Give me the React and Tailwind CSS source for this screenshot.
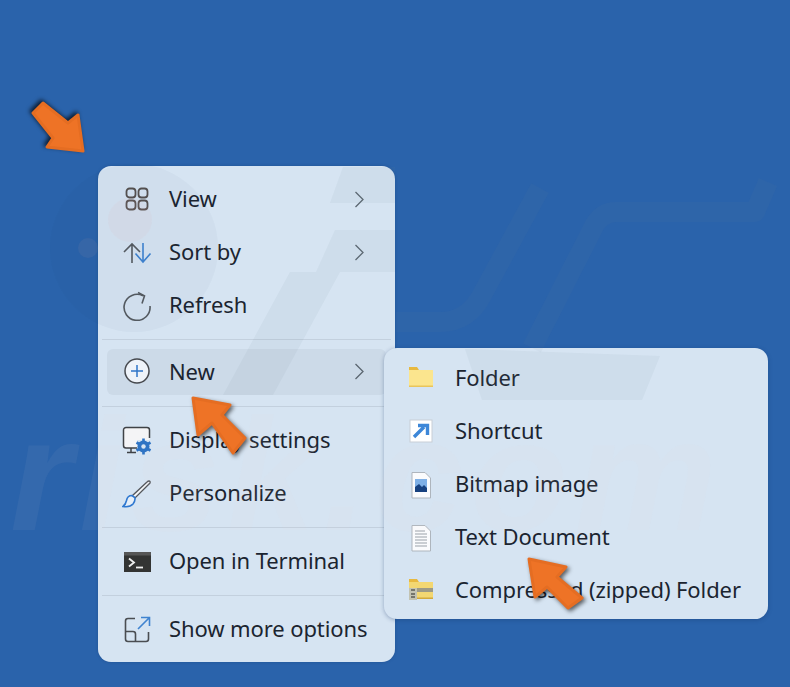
const Chevron = () => (
  <svg width="10" height="18" viewBox="0 0 10 18" fill="none" className="mr-[31px] ml-auto shrink-0">
    <path d="M1.5 1 9 8.500l-7.500 7.500" stroke="#5b6670" strokeWidth="1.3" />
  </svg>
);

const Ico = ({ children }) => (
  <svg width="30" height="30" viewBox="0 0 30 30" fill="none" className="shrink-0">
    {children}
  </svg>
);

const ViewIcon = () => (
  <Ico>
    <g stroke="#55504f" strokeWidth="1.800">
      <rect x="4.500" y="3.500" width="9" height="9" rx="3" />
      <rect x="16.500" y="3.500" width="9" height="9" rx="3" />
      <rect x="4.500" y="15.500" width="9" height="9" rx="3" />
      <rect x="16.500" y="15.500" width="9" height="9" rx="3" />
    </g>
  </Ico>
);
const SortIcon = () => (
  <Ico>
    <path d="M10 25V6M2 14l8-8 8 8" stroke="#555a60" strokeWidth="1.600" />
    <path d="M21 5v19M13.500 15.500l7.500 8.500 7.500-8.500" stroke="#3f83d0" strokeWidth="1.600" />
  </Ico>
);
const RefreshIcon = () => (
  <Ico>
    <path d="M21 4.800A13 13 0 1 0 28 15" stroke="#555a60" strokeWidth="1.600" />
    <path d="M16 1.500 22.500 5 20 12.500" stroke="#555a60" strokeWidth="1.600" />
  </Ico>
);
const NewIcon = () => (
  <Ico>
    <circle cx="15" cy="14" r="12" fill="#eef3f9" stroke="#46494e" strokeWidth="1.500" />
    <path d="M15 8v12M9 14h12" stroke="#2f75c8" strokeWidth="1.500" />
  </Ico>
);
const DisplayIcon = () => (
  <Ico>
    <path d="M4 1.500h21A2.500 2.500 0 0 1 27.500 4v10H15v8H4A2.500 2.500 0 0 1 1.500 19.500V4A2.500 2.500 0 0 1 4 1.500Z" fill="#f4f4f6" />
    <path d="M15 22H4a2.500 2.500 0 0 1-2.500-2.500V4A2.500 2.500 0 0 1 4 1.500h21A2.500 2.500 0 0 1 27.500 4v8" stroke="#3f4246" strokeWidth="1.500" />
    <path d="M9 22v4M5 26.500h9" stroke="#3f4246" strokeWidth="1.500" />
    <circle cx="21.500" cy="20.500" r="6" fill="#2f74c4" />
    <path d="M21.500 12.500v16M14.500 16.500l14 8M14.500 24.500l14-8" stroke="#2f74c4" strokeWidth="2.600" />
    <circle cx="21.500" cy="20.500" r="2.200" fill="#d8e5f2" />
  </Ico>
);
const BrushIcon = () => (
  <Ico>
    <path d="M27 2c1 0 1.500 1 1 2L13 19l-3-2L25 3c.6-.6 1.300-1 2-1Z" fill="#f2f4f7" stroke="#53565b" strokeWidth="1.300" />
    <path d="M10 16.500c-3 0-5 2-5.500 5C4 24 3 26 1 27.500c4 .6 8-.2 10-2.500 1.500-2 2.500-4 1.800-6.500Z" fill="#e5eef8" stroke="#2f78d0" strokeWidth="1.600" />
  </Ico>
);
const TerminalIcon = () => (
  <Ico>
    <rect x="2" y="5" width="27" height="20" fill="#333433" />
    <rect x="2" y="5" width="27" height="3.500" fill="#565656" />
    <path d="m7 11.500 5 4-5 4" stroke="#f0f0f0" strokeWidth="1.800" />
    <path d="M14 20.500h7" stroke="#f0f0f0" strokeWidth="1.800" />
  </Ico>
);
const MoreIcon = () => (
  <Ico>
    <path d="M13 3.500H6A2.500 2.500 0 0 0 3.500 6v18A2.500 2.500 0 0 0 6 26.500h18a2.500 2.500 0 0 0 2.500-2.500v-7" stroke="#4a4d52" strokeWidth="1.600" />
    <path d="M3.500 16.500H11a2.500 2.500 0 0 1 2.500 2.500v7.500" stroke="#4a4d52" strokeWidth="1.600" />
    <path d="M16 14 27 3M19 2.500h8.500V11" stroke="#3f83d0" strokeWidth="1.600" />
  </Ico>
);

const FolderIcon = () => (
  <Ico>
    <path d="M3 3h8l2 3h-10Z" fill="#e8b93f" />
    <rect x="3" y="6" width="24" height="17" fill="#fbe58e" />
    <rect x="3" y="21.500" width="24" height="1.500" fill="#e9c55b" />
  </Ico>
);
const ShortcutIcon = () => (
  <Ico>
    <rect x="4" y="3" width="22" height="22" fill="#ffffff" stroke="#c8ced6" />
    <path d="M8 20 18 10M12 8.500h9.500V18" stroke="#3d87d8" strokeWidth="3.400" />
  </Ico>
);
const BitmapIcon = () => (
  <Ico>
    <path d="M6 2.500h13l5.500 5.500v20H6Z" fill="#fafbfd" stroke="#aeb5bd" />
    <rect x="9" y="9" width="12" height="13" fill="#7fb0e6" />
    <path d="M9 22v-5l4-3 3 3 2-2 3 3v4Z" fill="#17417f" />
  </Ico>
);
const TextIcon = () => (
  <Ico>
    <path d="M6 2.500h13l5.500 5.500v20H6Z" fill="#fafbfd" stroke="#aeb5bd" />
    <path d="M9 8h10M9 11h12M9 14h12M9 17h12M9 20h12M9 23h12" stroke="#9aa1a9" />
  </Ico>
);
const ZipIcon = () => (
  <Ico>
    <path d="M3 3h8l2 3h-10Z" fill="#e8b93f" />
    <rect x="3" y="6" width="24" height="17" fill="#f3d772" />
    <rect x="3" y="12" width="24" height="4" fill="#9d9a86" />
    <rect x="3" y="12" width="8" height="12" fill="#c3c3b2" />
    <path d="M5 14h4M5 18h4M5 21h4" stroke="#5c5c55" strokeWidth="1.500" />
    <rect x="11" y="21.500" width="16" height="1.500" fill="#d2a93c" />
  </Ico>
);

const Row = ({ icon, label, arrow, short }) => (
  <div className={`flex items-center ${short ? "h-[46px]" : "h-[53px]"}`}>
    <div className="ml-[24px] flex w-[47px] shrink-0 items-center">{icon}</div>
    <span className="pb-[3px] text-[22px] leading-none tracking-[-0.1px] whitespace-nowrap text-[#1b2430]">{label}</span>
    {arrow && <Chevron />}
  </div>
);

const Sep = () => <div className="mx-[4px] my-[7px] h-[1px] bg-[#c3d0de]" />;

const SubRow = ({ icon, label }) => (
  <div className="flex h-[53px] items-center">
    <div className="ml-[22px] flex w-[49px] shrink-0 items-center">{icon}</div>
    <span className="pb-[3px] text-[22px] leading-none tracking-[-0.1px] whitespace-nowrap text-[#1b2430]">{label}</span>
  </div>
);

const Arrow = ({ points, cls }) => (
  <polygon points={points} fill="#ee7326" stroke="#e56d22" strokeWidth="3" strokeLinejoin="round" className={cls} />
);

const WM = "#78879b";

export default function App() {
  return (
    <div
      className="relative h-[687px] w-[790px] overflow-hidden bg-[#2a63ab] pt-[166px] pl-[98px]"
      style={{ fontFamily: '"Noto Sans", "Open Sans", sans-serif' }}
    >
      <div className="relative w-[297px] rounded-[13px] bg-[#d6e4f2] pt-[7px] pb-[6px] shadow-[0_0_3px_rgba(20,50,100,0.35)]">
        <Row icon={<ViewIcon />} label="View" arrow />
        <Row icon={<SortIcon />} label="Sort by" arrow />
        <Row icon={<RefreshIcon />} label="Refresh" />
        <Sep />
        <div className="mx-[9px] mt-[9px] mb-[11px] rounded-[6px] bg-[#ccdae8]">
          <div className="-mx-[9px]">
            <Row icon={<NewIcon />} label="New" arrow short />
          </div>
        </div>
        <Sep />
        <Row icon={<DisplayIcon />} label="Display settings" />
        <Row icon={<BrushIcon />} label="Personalize" />
        <Sep />
        <Row icon={<TerminalIcon />} label="Open in Terminal" />
        <Sep />
        <Row icon={<MoreIcon />} label="Show more options" />
      </div>

      <div className="absolute top-[348px] left-[384px] w-[384px] rounded-[13px] bg-[#d6e4f2] pt-[4px] pb-[2px] shadow-[0_1px_4px_rgba(20,50,100,0.35)]">
        <SubRow icon={<FolderIcon />} label="Folder" />
        <SubRow icon={<ShortcutIcon />} label="Shortcut" />
        <SubRow icon={<BitmapIcon />} label="Bitmap image" />
        <SubRow icon={<TextIcon />} label="Text Document" />
        <SubRow icon={<ZipIcon />} label="Compressed (zipped) Folder" />
      </div>

      <svg className="pointer-events-none absolute inset-0" width="790" height="687" viewBox="0 0 790 687" fill="none">
        <circle cx="134" cy="248" r="84" fill="#1e3c6e" fillOpacity="0.03" />
        <circle cx="130" cy="220" r="22" fill="#e9a8a0" fillOpacity="0.08" />
        <circle cx="88" cy="248" r="10" fill="#e9a8a0" fillOpacity="0.07" />
        <g fill={WM} fillOpacity="0.08">
          <polygon points="343,167 395,167 395,203 330,203" />
          <polygon points="335,230 395,230 395,272 316,272" />
          <polygon points="290,272 340,272 273,395 223,395" />
          <polygon points="465,349 660,356 642,400 482,400" />
        </g>
        <g stroke={WM} strokeOpacity="0.06" strokeWidth="20" strokeLinejoin="round" fill="none">
          <path d="M540 188 482 295Q468 322 440 322H396" />
          <path d="M768 182 755 212H616Q600 212 592 230L532 348" />
        </g>
        <Arrow points="43,103 68,123 78,115 83,151 47,147 53,138 33,113" cls="drop-shadow-[-2px_-2px_2px_rgba(0,0,0,0.7)]" />
        <Arrow points="193,398 230,405 222,415 245,438 233,453 212,423 198,435" cls="drop-shadow-[2px_2px_2px_rgba(0,0,0,0.6)]" />
        <Arrow points="529,559 566,567 557,577 582,598 568,608 547,587 535,597" cls="drop-shadow-[2px_2px_2px_rgba(0,0,0,0.6)]" />
      </svg>
      <div
        aria-hidden="true"
        className="pointer-events-none absolute top-[395px] left-[10px] text-[160px] leading-none font-bold tracking-[7px] whitespace-nowrap text-[#f0d8d80e] italic"
        style={{ fontFamily: '"Liberation Sans", sans-serif' }}
      >
        risk.com
      </div>
    </div>
  );
}
